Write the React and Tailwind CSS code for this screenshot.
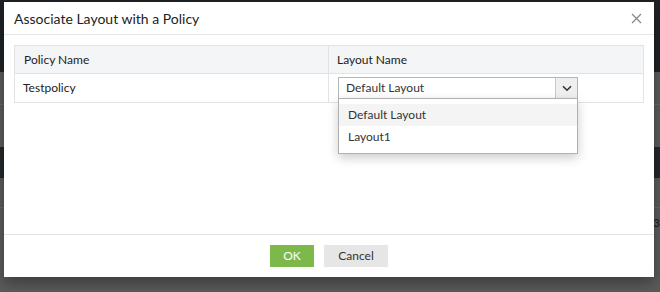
import { useState } from "react";

const font = { fontFamily: "Lato, 'Open Sans', sans-serif" };

function Backdrop() {
  // dimmed page behind the modal
  return (
    <div className="flex flex-col h-[292px] bg-[#5b5b5b]">
      <div className="h-[72px] bg-[#1f2225]" />
      <div className="h-[33px] border-b border-[#6a6a6a]" />
      <div className="h-[42px]" />
      <div className="h-[31px] bg-[#25282b]" />
      <div className="h-[30px] border-b border-[#6a6a6a]" />
      <div className="flex justify-end pr-[0px] pt-[6px] text-[12px] text-[#1a1a2a]">3</div>
    </div>
  );
}

function LayoutSelect() {
  const [value] = useState("Default Layout");
  const options = ["Default Layout", "Layout1"];
  return (
    <div className="relative w-[240px]">
      <div className="flex h-[22px] border border-[#b5b5b5] bg-white">
        <div className="flex-1 flex items-center pl-[7px] text-[12px] text-[#333]">{value}</div>
        <div className="w-[22px] flex items-center justify-center border-l border-[#c8c8c8] bg-[#efefef]">
          <svg width="10" height="7" viewBox="0 0 10 7" fill="none">
            <path d="M1 1.2 5 5.2 9 1.2" stroke="#333" strokeWidth="1.6" />
          </svg>
        </div>
      </div>
      <div className="absolute left-0 top-[21px] w-[240px] bg-white border border-[#b0b0b0] shadow-[0_4px_10px_rgba(0,0,0,0.2)] py-[5px] z-10">
        {options.map((o, i) => (
          <div
            key={o}
            className={`h-[22px] flex items-center pl-[9px] text-[12px] text-[#333] ${i === 0 ? "bg-[#f4f4f4]" : ""}`}
          >
            {o}
          </div>
        ))}
      </div>
    </div>
  );
}

export default function App() {
  return (
    <div className="relative w-[660px] h-[292px] overflow-hidden" style={font}>
      <Backdrop />

      {/* Modal */}
      <div className="absolute left-[4px] top-[2px] w-[650px] h-[275px] bg-white flex flex-col shadow-[0_6px_14px_rgba(0,0,0,0.35)]">
        <div className="h-[33px] flex items-center justify-between pl-[10px] pr-[12px] border-b border-[#e5e5e5]">
          <span className="text-[14px] text-[#222]">Associate Layout with a Policy</span>
          <svg width="11" height="11" viewBox="0 0 11 11">
            <path d="M1 1 10 10M10 1 1 10" stroke="#888" strokeWidth="1.3" />
          </svg>
        </div>

        <div className="flex-1 px-[10px] pt-[10px]">
          <div className="border border-[#e3e3e3] text-[12px] text-[#222]">
            <div className="grid grid-cols-[314px_1fr] h-[28px] bg-[#f4f5f7] border-b border-[#e3e3e3]">
              <div className="flex items-center pl-[9px] border-r border-[#e3e3e3]">Policy Name</div>
              <div className="flex items-center pl-[8px]">Layout Name</div>
            </div>
            <div className="grid grid-cols-[314px_1fr] h-[28px]">
              <div className="flex items-center pl-[8px] border-r border-[#e3e3e3]">Testpolicy</div>
              <div className="flex items-center pl-[9px]">
                <LayoutSelect />
              </div>
            </div>
          </div>
        </div>

        <div className="h-[43px] border-t border-[#e3e3e3] flex items-center justify-center gap-[10px] pb-[1px]">
          <button className="w-[44px] h-[22px] bg-[#7cb94a] text-white text-[12px]">OK</button>
          <button className="w-[64px] h-[22px] bg-[#e6e6e6] text-[#333] text-[12px]">Cancel</button>
        </div>
      </div>
    </div>
  );
}
